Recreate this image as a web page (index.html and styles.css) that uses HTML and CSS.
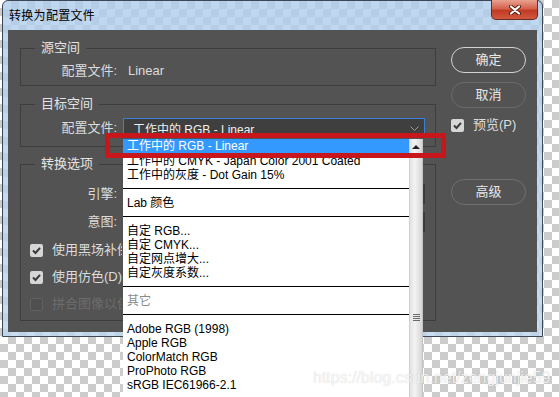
FILE: index.html
```html
<!DOCTYPE html>
<html lang="zh">
  <head>
    <meta charset="UTF-8">
    <title>转换为配置文件</title>
    <link rel="stylesheet" href="styles.css">
  </head>
  <body>
    <div class="window">
      <div class="titlebar">
        <span class="title">转换为配置文件</span>
        <div class="close-btn">
          <svg width="16" height="10" viewBox="0 0 16 10">
            <path d="M4 1.5l8 7M12 1.5l-8 7" stroke="#5a1a12" stroke-width="4" stroke-linecap="round"/>
            <path d="M4 1.5l8 7M12 1.5l-8 7" stroke="#ffffff" stroke-width="2.2" stroke-linecap="round"/>
          </svg>
        </div>
      </div>

      <div class="panel">
        <div class="main">
          <div class="group group-source">
            <div class="legend">源空间</div>
            <div class="row">
              <span class="label">配置文件:</span>
              <span class="value">Linear</span>
            </div>
          </div>

          <div class="group group-dest">
            <div class="legend">目标空间</div>
            <div class="row">
              <span class="label">配置文件:</span>
              <div class="select focused">
                <span>工作中的 RGB - Linear</span>
                <svg class="chevron" width="9" height="5" viewBox="0 0 9 5">
                  <path d="M0.5 0.5l4 4 4-4" stroke="#9a9a9a" fill="none"/>
                </svg>
              </div>
            </div>
          </div>

          <div class="group group-options">
            <div class="legend">转换选项</div>
            <div class="row">
              <span class="label">引擎:</span>
              <div class="select"></div>
            </div>
            <div class="row row-intent">
              <span class="label">意图:</span>
              <div class="select"></div>
            </div>
            <div class="check first">
              <span class="box checked"><svg width="13" height="13" viewBox="0 0 13 13"><path d="M3 6.5l2.5 2.5L10 3.8" stroke="#3a3a3a" stroke-width="2" fill="none"/></svg></span>
              <span class="check-text">使用黑场补偿</span>
            </div>
            <div class="check">
              <span class="box checked"><svg width="13" height="13" viewBox="0 0 13 13"><path d="M3 6.5l2.5 2.5L10 3.8" stroke="#3a3a3a" stroke-width="2" fill="none"/></svg></span>
              <span class="check-text">使用仿色(D)</span>
            </div>
            <div class="check disabled">
              <span class="box"></span>
              <span class="check-text">拼合图像以保留外观</span>
            </div>
          </div>
        </div>

        <div class="side">
          <div class="btn btn-ok">确定</div>
          <div class="btn btn-cancel">取消</div>
          <div class="check preview">
            <span class="box checked"><svg width="13" height="13" viewBox="0 0 13 13"><path d="M3 6.5l2.5 2.5L10 3.8" stroke="#3a3a3a" stroke-width="2" fill="none"/></svg></span>
            <span>预览(P)</span>
          </div>
          <div class="btn btn-advanced">高级</div>
        </div>
      </div>
    </div>

    <div class="dropdown">
      <div class="items">
        <div class="item selected">工作中的 RGB - Linear</div>
        <div class="item">工作中的 CMYK - Japan Color 2001 Coated</div>
        <div class="item">工作中的灰度 - Dot Gain 15%</div>
        <div class="sep"></div>
        <div class="item">Lab 颜色</div>
        <div class="sep"></div>
        <div class="item">自定 RGB...</div>
        <div class="item">自定 CMYK...</div>
        <div class="item">自定网点增大...</div>
        <div class="item">自定灰度系数...</div>
        <div class="sep"></div>
        <div class="item muted">其它</div>
        <div class="sep"></div>
        <div class="item">Adobe RGB (1998)</div>
        <div class="item">Apple RGB</div>
        <div class="item">ColorMatch RGB</div>
        <div class="item">ProPhoto RGB</div>
        <div class="item">sRGB IEC61966-2.1</div>
      </div>
      <div class="scrollbar">
        <div class="arrow-up"></div>
        <div class="grip"><i></i><i></i><i></i><i></i></div>
      </div>
    </div>

    <div class="highlight-box"></div>
    <div class="watermark">https://blog.csdn.net/zengjunjie59</div>
  </body>
</html>
```

FILE: styles.css
```css
body {
    margin: 0;
    width: 559px;
    height: 397px;
    overflow: hidden;
    position: relative;
    font-family: "Liberation Sans", "Noto Sans CJK SC", sans-serif;
    background: repeating-conic-gradient(#cccccc 0 25%, #ffffff 0 50%) 0 0 / 16px 16px;
}

.window {
    box-sizing: border-box;
    margin-left: 2px;
    width: 541px;
    height: 337px;
    border: 1px solid #3c4654;
    border-radius: 6px 6px 0 0;
    background:
        linear-gradient(rgba(176, 206, 236, 0.82), rgba(190, 214, 238, 0.82)),
        repeating-conic-gradient(#c8c8c8 0 25%, #ffffff 0 50%) 0 0 / 16px 16px;
    display: flex;
    flex-direction: column;
}

.titlebar {
    height: 29px;
    display: flex;
    align-items: flex-start;
    justify-content: space-between;
}

.title {
    margin: 7px 0 0 6px;
    font-size: 12px;
    line-height: 16px;
    letter-spacing: 0.3px;
    color: #000000;
}

.close-btn {
    box-sizing: border-box;
    width: 47px;
    height: 20px;
    margin: -1px 4px 0 0;
    border: 1px solid #6b2a22;
    border-top: none;
    border-radius: 0 0 5px 5px;
    background: linear-gradient(#e9a190, #d4624d 45%, #c13a24 55%, #d0583f);
    display: flex;
    align-items: center;
    justify-content: center;
}

.panel {
    box-sizing: border-box;
    margin: 0 5px;
    width: 529px;
    height: 302px;
    background-color: #535353;
    padding: 18px 0 0 12px;
    display: flex;
    color: #dcdcdc;
    font-size: 13px;
}

.main {
    width: 416px;
}

.group {
    border: 1px solid #3e3e3e;
    display: flex;
    flex-direction: column;
}

.legend {
    align-self: flex-start;
    margin: -9px 0 0 14px;
    padding: 0 6px;
    height: 16px;
    line-height: 16px;
    background-color: #535353;
    color: #e4e4e4;
    font-size: 13px;
}

.row {
    display: flex;
    align-items: center;
}

.label {
    width: 96px;
    text-align: right;
    line-height: 16px;
}

.value {
    margin-left: 11px;
    line-height: 16px;
}

.group-source .row {
    margin-top: 7px;
    height: 16px;
}

.group-source {
    padding-bottom: 6px;
}

.group-dest {
    margin-top: 18px;
    padding-bottom: 8px;
}

.group-dest .row {
    margin-top: 6px;
}

.select {
    box-sizing: border-box;
    margin-left: 6px;
    width: 302px;
    height: 20px;
    padding: 0 9px;
    background-color: #3f3f3f;
    border: 1px solid #3a3a3a;
    display: flex;
    align-items: center;
    justify-content: space-between;
    font-size: 12px;
    color: #f0f0f0;
}

.select.focused {
    border-color: #3b80d2;
}

.chevron {
    margin-right: -4px;
}

.group-options {
    margin-top: 17px;
    padding-bottom: 8px;
}

.group-options .row {
    margin-top: 12px;
}

.group-options .row-intent {
    margin-top: 8px;
}

.check {
    display: flex;
    align-items: center;
    height: 16px;
    line-height: 16px;
    margin-top: 11px;
    padding-left: 9px;
    gap: 9px;
}

/* the open list covers the rest of these labels */
.check-text {
    max-width: 70px;
    overflow: hidden;
    white-space: nowrap;
}

.check.first {
    margin-top: 10px;
}

.box {
    box-sizing: border-box;
    width: 13px;
    height: 13px;
    border-radius: 2px;
    display: flex;
}

.box.checked {
    background-color: #d6d6d6;
}

.check.disabled {
    color: #6c6c6c;
}

.check.disabled .box {
    border: 1px solid #616161;
    background-color: #4f4f4f;
}

.side {
    margin-left: 15px;
    width: 75px;
    display: flex;
    flex-direction: column;
}

.btn {
    box-sizing: border-box;
    height: 26px;
    border: 1px solid #7d7d7d;
    border-radius: 13px;
    text-align: center;
    line-height: 24px;
    font-size: 13px;
    color: #e8e8e8;
}

.btn-ok {
    margin-top: -1px;
    border: 1.5px solid #d2d2d2;
}

.btn-cancel {
    margin-top: 9px;
    border-color: #6a6a6a;
}

.check.preview {
    margin-top: 9px;
    padding-left: 0;
    gap: 9px;
}

.btn-advanced {
    margin-top: 46px;
    border-color: #707070;
}

/* open profile list */
.dropdown {
    position: absolute;
    left: 123px;
    top: 139px;
    bottom: 0;
    width: 300px;
    background-color: #ffffff;
    display: flex;
    font-size: 12px;
    color: #000000;
}

.items {
    flex: 1;
}

.item {
    height: 14px;
    line-height: 14px;
    padding-left: 4px;
    white-space: nowrap;
}

.item.selected {
    background-color: #3399ff;
    color: #ffffff;
    height: 15px;
}

.item.muted {
    color: #8a8a8a;
}

.sep {
    height: 1px;
    margin: 6px 0 7px;
    background-color: #000000;
}

.scrollbar {
    box-sizing: border-box;
    width: 14px;
    border-left: 1px solid #d0d0d0;
    border-right: 1px solid #c4c4c4;
    background: linear-gradient(to right, #e2e2e2, #f3f3f3 40%, #d6d6d6);
    display: flex;
    flex-direction: column;
    align-items: center;
}

.arrow-up {
    margin-top: 6px;
    width: 0;
    height: 0;
    border-left: 4px solid transparent;
    border-right: 4px solid transparent;
    border-bottom: 4px solid #222222;
}

.grip {
    margin-top: 165px;
    display: flex;
    flex-direction: column;
    gap: 1px;
}

.grip i {
    display: block;
    width: 7px;
    height: 1px;
    background-color: #6a6a6a;
}

.highlight-box {
    position: absolute;
    left: 105px;
    top: 133px;
    width: 341px;
    height: 25px;
    box-sizing: border-box;
    border: 5px solid #c8161d;
}

.watermark {
    position: absolute;
    left: 313px;
    top: 369px;
    font-size: 16px;
    line-height: 18px;
    color: rgba(255, 255, 255, 0.8);
    text-shadow: 0 0 1px rgba(0, 0, 0, 0.2);
    white-space: nowrap;
}
```
